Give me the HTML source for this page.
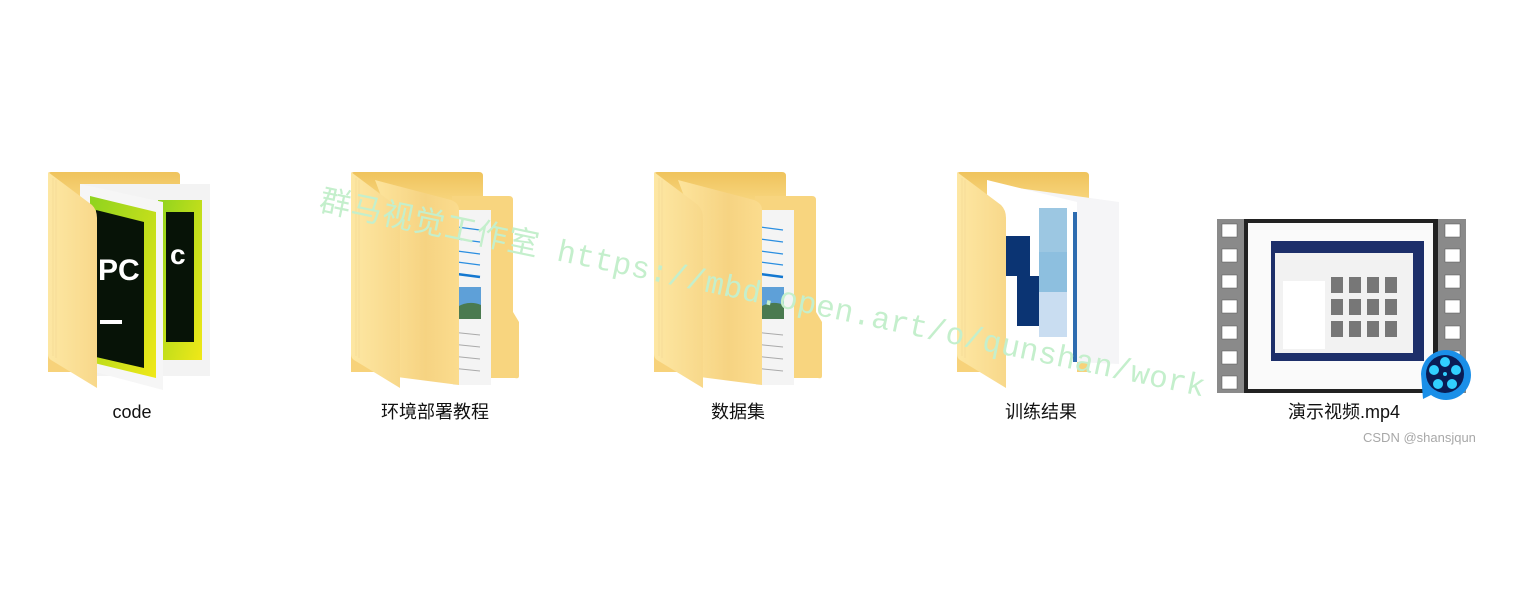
<!DOCTYPE html>
<html><head><meta charset="utf-8"><style>
body{margin:0;width:1516px;height:594px;background:#fff;position:relative;overflow:hidden;font-family:"Liberation Sans","Noto Sans CJK SC",sans-serif}
.a{position:absolute}
.lbl{position:absolute;top:400px;font-size:18px;color:#111;width:200px;text-align:center;line-height:24px}
</style></head><body>
<svg class="a" style="left:0;top:0" width="1516" height="594">
<defs>
<linearGradient id="bk" x1="0" y1="0" x2="0" y2="1"><stop offset="0" stop-color="#efc35c"/><stop offset=".15" stop-color="#f8d67f"/><stop offset="1" stop-color="#f7d27a"/></linearGradient>
<linearGradient id="fr" x1="0" y1="0" x2="1" y2="0"><stop offset="0" stop-color="#fde7a3"/><stop offset="1" stop-color="#f8d88a"/></linearGradient>
<linearGradient id="md" x1="0" y1="0" x2="1" y2="0"><stop offset="0" stop-color="#fde49c"/><stop offset=".6" stop-color="#f6d382"/><stop offset="1" stop-color="#fbdc8e"/></linearGradient>
<linearGradient id="pc" x1="0" y1="0" x2="1" y2="1"><stop offset="0" stop-color="#8ed31e"/><stop offset="1" stop-color="#f0e818"/></linearGradient>
<g id="front"><path d="M0,0 L44,33 Q49,38 49,46 L49,216 L3,188 Q0,186 0,182 Z" fill="url(#fr)"/><path d="M5,6 L5,184 M8,8 L8,186" stroke="#f6dc98" stroke-width="1"/></g>
<g id="back"><path d="M0,3 Q0,0 3,0 L128,0 Q132,0 132,4 L132,200 L0,200 Z" fill="url(#bk)"/></g>
<g id="docf">
<path d="M101,24 L158,24 Q162,24 162,28 L162,140 L168,150 L168,204 Q168,207 164,206 L101,206 Z" fill="#f8d57f"/>
<rect x="102" y="38" width="38" height="175" fill="#f4f4f4"/>
<g stroke="#2a8ee0" stroke-width="1.3"><line x1="106" y1="55" x2="129" y2="58"/><line x1="106" y1="67" x2="129" y2="70"/><line x1="106" y1="79" x2="129" y2="82"/><line x1="106" y1="90" x2="129" y2="93"/><line x1="106" y1="102" x2="129" y2="105" stroke-width="2.5" stroke="#1478d0"/></g>
<rect x="106" y="115" width="24" height="32" fill="#5ea0d8"/><path d="M106,135 Q118,128 130,133 L130,147 L106,147 Z" fill="#4a7a50"/>
<g stroke="#aaa" stroke-width="1"><line x1="100" y1="160" x2="129" y2="163"/><line x1="100" y1="172" x2="129" y2="175"/><line x1="100" y1="184" x2="129" y2="187"/><line x1="100" y1="196" x2="129" y2="199"/></g>
<path d="M24,8 L100,28 Q108,31 108,38 L108,213 L46,205 L46,152 L36,140 L36,40 Z" fill="url(#md)"/>
</g>
</defs>
<g transform="translate(48,172)">
<use href="#back"/>
<rect x="32" y="12" width="130" height="192" fill="#f3f3f3"/>
<rect x="110" y="28" width="44" height="160" fill="url(#pc)"/><rect x="118" y="40" width="28" height="130" fill="#071307"/>
<path d="M32,12 L115,30 L115,218 L32,196 Z" fill="#f6f6f6"/>
<path d="M42,24 L108,40 L108,206 L42,190 Z" fill="url(#pc)"/>
<path d="M48,38 L96,50 L96,196 L48,185 Z" fill="#071307"/>
<text x="50" y="108" fill="#fff" font-size="30" font-weight="bold" font-family="Liberation Sans">PC</text>
<rect x="52" y="148" width="22" height="4" fill="#fff"/>
<text x="122" y="92" fill="#fff" font-size="28" font-weight="bold" font-family="Liberation Sans">c</text>
<use href="#front"/>
</g>
<g transform="translate(351,172)"><use href="#back"/><use href="#docf"/><use href="#front"/></g>
<g transform="translate(654,172)"><use href="#back"/><use href="#docf"/><use href="#front"/></g>
<g transform="translate(957,172)">
<use href="#back"/>
<path d="M46,14 L162,30 L162,192 L118,190 L46,176 Z" fill="#f5f5f7"/>
<path d="M30,8 L120,30 L120,218 L30,198 Z" fill="#fff"/>
<rect x="48" y="64" width="25" height="40" fill="#0b3473"/><rect x="60" y="104" width="28" height="50" fill="#0b3473"/>
<rect x="82" y="36" width="28" height="44" fill="#9cc7e2"/><rect x="82" y="80" width="28" height="40" fill="#8dbfdf"/><rect x="82" y="120" width="28" height="45" fill="#c9ddf1"/>
<rect x="116" y="40" width="4" height="150" fill="#2d6cb0"/>
<use href="#front"/>
</g>
<g transform="translate(1217,219)">
<rect width="249" height="174" fill="#8a8a8a"/>
<rect x="27" width="194" height="174" fill="#222"/>
<rect x="31" y="4" width="185" height="166" fill="#fafafa"/>
<g fill="#fff" stroke="#555" stroke-width=".5">
<rect x="5" y="5" width="15" height="13"/><rect x="5" y="30" width="15" height="13"/><rect x="5" y="56" width="15" height="13"/><rect x="5" y="81" width="15" height="13"/><rect x="5" y="107" width="15" height="13"/><rect x="5" y="132" width="15" height="13"/><rect x="5" y="157" width="15" height="13"/>
<rect x="228" y="5" width="15" height="13"/><rect x="228" y="30" width="15" height="13"/><rect x="228" y="56" width="15" height="13"/><rect x="228" y="81" width="15" height="13"/><rect x="228" y="107" width="15" height="13"/><rect x="228" y="132" width="15" height="13"/><rect x="228" y="157" width="15" height="13"/>
</g>
<rect x="54" y="22" width="153" height="120" fill="#1d2f6a"/>
<rect x="58" y="34" width="138" height="100" fill="#f2f2f2"/>
<rect x="66" y="62" width="42" height="68" fill="#fff"/>
<g fill="#777"><rect x="114" y="58" width="12" height="16"/><rect x="132" y="58" width="12" height="16"/><rect x="150" y="58" width="12" height="16"/><rect x="168" y="58" width="12" height="16"/><rect x="114" y="80" width="12" height="16"/><rect x="132" y="80" width="12" height="16"/><rect x="150" y="80" width="12" height="16"/><rect x="168" y="80" width="12" height="16"/><rect x="114" y="102" width="12" height="16"/><rect x="132" y="102" width="12" height="16"/><rect x="150" y="102" width="12" height="16"/><rect x="168" y="102" width="12" height="16"/></g>
<path d="M204,155 A25,25 0 1,1 214,176 L206,180 Z" fill="#1a8fe8"/>
<circle cx="228" cy="155" r="19" fill="#0a1d55"/>
<g fill="#31d0ff"><circle cx="228" cy="143" r="5"/><circle cx="239" cy="151" r="5"/><circle cx="235" cy="165" r="5"/><circle cx="221" cy="165" r="5"/><circle cx="217" cy="151" r="5"/><circle cx="228" cy="155" r="2"/></g>
</g>
<text x="318" y="210" transform="rotate(11.9 318 210)" fill="#c4efcc" font-size="31" font-family="Liberation Mono,Noto Sans CJK SC,monospace" letter-spacing="1">群马视觉工作室<tspan font-size="31" letter-spacing="0.3"> https://mbd.open.art/o/qunshan/work</tspan></text>
</svg>
<div class="lbl" style="left:32px">code</div>
<div class="lbl" style="left:335px">环境部署教程</div>
<div class="lbl" style="left:638px">数据集</div>
<div class="lbl" style="left:941px">训练结果</div>
<div class="lbl" style="left:1244px">演示视频.mp4</div>
<div class="a" style="left:1363px;top:430px;font-size:13px;color:#a8a8a8">CSDN @shansjqun</div>
</body></html>
